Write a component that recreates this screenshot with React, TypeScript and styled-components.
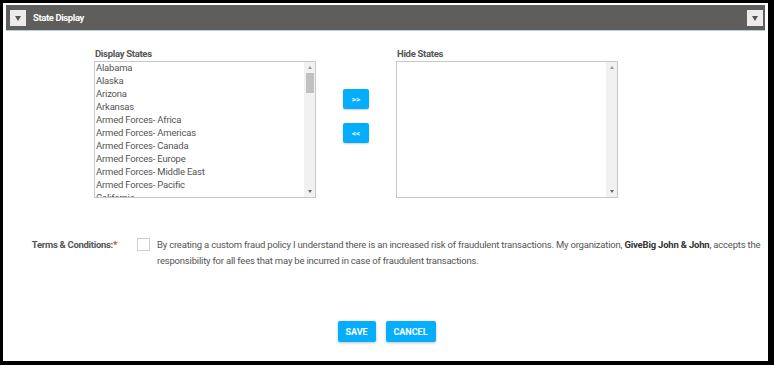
import React, { useState } from 'react';
import styled, { createGlobalStyle } from 'styled-components';

const GlobalStyle = createGlobalStyle`
  html, body {
    margin: 0;
    padding: 0;
    background: #000;
    font-family: Roboto, 'Liberation Sans', Arial, sans-serif;
  }
`

const Panel = styled.div`
  margin: 3px 6px 0 3px;
  height: 358px;
  padding: 2px 3px 0 3px;
  background: #fff;
  box-sizing: border-box;
  display: flex;
  flex-direction: column;
`

const Header = styled.div`
  height: 25px;
  background: #5e5e5c;
  border-bottom: 1px solid #b9cfd6;
  display: flex;
  align-items: center;
  padding: 0 2px 0 4px;
`

const Toggle = styled.button`
  width: 16px;
  height: 16px;
  padding: 0;
  border: none;
  background: #ececec;
  display: flex;
  align-items: center;
  justify-content: center;
  cursor: pointer;

  &::after {
    content: '';
    border-left: 3.5px solid transparent;
    border-right: 3.5px solid transparent;
    border-top: 5px solid #555;
    margin-top: 1px;
  }
`

const Title = styled.div`
  flex: 1;
  color: #fff;
  font-size: 9.5px;
  font-weight: bold;
  margin-left: 7px;
  letter-spacing: -0.4px;
`

const ListsRow = styled.div`
  display: flex;
  margin: 16px 0 0 88px;
  gap: 27px;
`

const ListColumn = styled.div`
  display: flex;
  flex-direction: column;
`

const ListLabel = styled.div`
  font-size: 9.5px;
  font-weight: bold;
  letter-spacing: -0.3px;
  color: #555;
  height: 14px;
  line-height: 14px;
  padding-left: 1px;
`

const ListBox = styled.div`
  width: 222px;
  height: 137px;
  box-sizing: border-box;
  border: 1px solid #c8c8c8;
  display: flex;
  overflow: hidden;
`

const Items = styled.div`
  flex: 1;
  overflow: hidden;
  padding: 0 1px;
  margin-top: -1px;
`

const Item = styled.div`
  font-size: 9.5px;
  letter-spacing: -0.2px;
  line-height: 13px;
  height: 13px;
  color: #555;
  white-space: nowrap;
`

const ScrollTrack = styled.div`
  width: 11px;
  background: #f1f1f1;
  display: flex;
  flex-direction: column;
  align-items: center;
`

const Arrow = styled.div<{ $down?: boolean }>`
  height: 11px;
  width: 11px;
  display: flex;
  align-items: center;
  justify-content: center;

  &::after {
    content: '';
    border-left: 2.5px solid transparent;
    border-right: 2.5px solid transparent;
    ${p => p.$down ? 'border-top: 3px solid #666;' : 'border-bottom: 3px solid #999;'}
  }
`

const TrackBody = styled.div`
  flex: 1;
  width: 100%;
  display: flex;
  justify-content: center;
`

const Thumb = styled.div`
  width: 8px;
  height: 20px;
  background: #c1c1c1;
`

const MoveColumn = styled.div`
  display: flex;
  flex-direction: column;
  gap: 14px;
  padding-top: 42px;
`

const MoveButton = styled.button`
  width: 26px;
  height: 20px;
  border: none;
  border-radius: 2px;
  background: #04aefc;
  color: #fff;
  font-size: 8px;
  font-weight: bold;
  font-family: Roboto, 'Liberation Sans', Arial, sans-serif;
  box-shadow: 0 1px 2px rgba(0, 0, 0, 0.2);
  padding: 0;
  cursor: pointer;
`

const TermsRow = styled.div`
  display: flex;
  align-items: flex-start;
  margin-top: 39px;
`

const TermsLabel = styled.div`
  width: 111px;
  text-align: right;
  font-size: 9.5px;
  font-weight: bold;
  letter-spacing: -0.3px;
  color: #555;
  line-height: 16px;
`

const Required = styled.span`
  color: #e53935;
`

const CheckBox = styled.span`
  width: 13px;
  height: 13px;
  box-sizing: border-box;
  border: 1px solid #cfcfcf;
  margin: 1px 7px 0 20px;
  flex-shrink: 0;
  background: #fff;
`

const TermsText = styled.div`
  flex: 1;
  font-size: 9.5px;
  letter-spacing: -0.2px;
  line-height: 16px;
  color: #555;
  padding-right: 2px;

  b {
    font-weight: bold;
    color: #333;
  }
`

const ActionRow = styled.div`
  display: flex;
  justify-content: center;
  gap: 10px;
  margin-top: 52px;
  padding-left: 2px;
`

const ActionButton = styled.button<{ $width: number }>`
  width: ${p => p.$width}px;
  height: 21px;
  border: none;
  border-radius: 2px;
  background: #04aefc;
  color: #fff;
  font-size: 9px;
  font-weight: bold;
  font-family: Roboto, 'Liberation Sans', Arial, sans-serif;
  box-shadow: 0 1px 3px rgba(0, 0, 0, 0.25);
  padding: 0;
  cursor: pointer;
`

const states = [
  'Alabama', 'Alaska', 'Arizona', 'Arkansas', 'Armed Forces- Africa', 'Armed Forces- Americas',
  'Armed Forces- Canada', 'Armed Forces- Europe', 'Armed Forces- Middle East', 'Armed Forces- Pacific',
  'California', 'Colorado',
];

const StateList: React.FC<{ items: string[]; thumb?: boolean }> = ({ items, thumb }) => (
  <ListBox>
    <Items>
      {items.map(s => <Item key={s}>{s}</Item>)}
    </Items>
    <ScrollTrack>
      <Arrow />
      <TrackBody>{thumb && <Thumb />}</TrackBody>
      <Arrow $down />
    </ScrollTrack>
  </ListBox>
);

const App: React.FC = () => {
  const [display] = useState<string[]>(states);
  const [hidden] = useState<string[]>([]);

  return (
    <>
      <GlobalStyle />
      <Panel>
        <Header>
          <Toggle />
          <Title>State Display</Title>
          <Toggle />
        </Header>
        <ListsRow>
          <ListColumn>
            <ListLabel>Display States</ListLabel>
            <StateList items={display} thumb />
          </ListColumn>
          <MoveColumn>
            <MoveButton>&gt;&gt;</MoveButton>
            <MoveButton>&lt;&lt;</MoveButton>
          </MoveColumn>
          <ListColumn>
            <ListLabel>Hide States</ListLabel>
            <StateList items={hidden} />
          </ListColumn>
        </ListsRow>
        <TermsRow>
          <TermsLabel>Terms &amp; Conditions:<Required>*</Required></TermsLabel>
          <CheckBox />
          <TermsText>
            By creating a custom fraud policy I understand there is an increased risk of fraudulent transactions. My organization, <b>GiveBig John &amp; John</b>, accepts the responsibility for all fees that may be incurred in case of fraudulent transactions.
          </TermsText>
        </TermsRow>
        <ActionRow>
          <ActionButton $width={38}>SAVE</ActionButton>
          <ActionButton $width={50}>CANCEL</ActionButton>
        </ActionRow>
      </Panel>
    </>
  );
};

export default App;
